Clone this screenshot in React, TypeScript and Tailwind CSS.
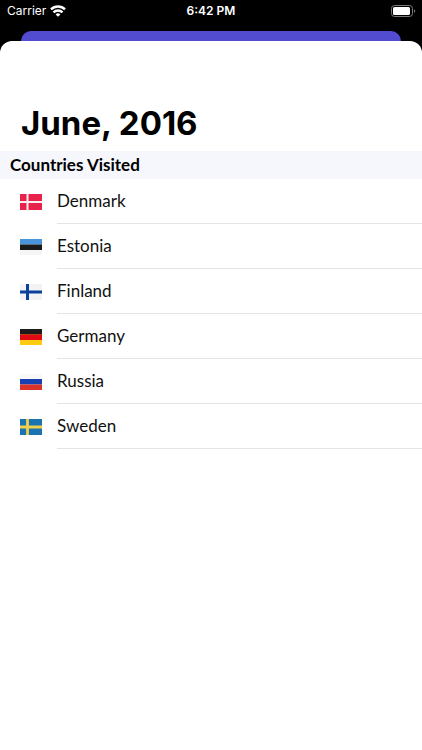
import React from 'react';

interface Country {
  name: string;
  flag: React.ReactNode;
}

const countries: Country[] = [
  {
    name: 'Denmark',
    flag: (
      <>
        <rect width="22" height="16" fill="#e8234b" />
        <path d="M7.5 0v16M0 8h22" stroke="#fbeef1" strokeWidth="2" />
      </>
    ),
  },
  {
    name: 'Estonia',
    flag: (
      <>
        <rect width="22" height="16" fill="#f5f5f5" />
        <rect width="22" height="5.5" fill="#4a94dc" />
        <rect y="5.5" width="22" height="5.5" fill="#1a1a1a" />
      </>
    ),
  },
  {
    name: 'Finland',
    flag: (
      <>
        <rect width="22" height="16" fill="#f2f3f5" />
        <path d="M7.5 0v16M0 8h22" stroke="#0b419b" strokeWidth="3" />
      </>
    ),
  },
  {
    name: 'Germany',
    flag: (
      <>
        <rect width="22" height="16" fill="#fdcb10" />
        <rect width="22" height="5.5" fill="#1f1a1b" />
        <rect y="5.5" width="22" height="5.5" fill="#e00a13" />
      </>
    ),
  },
  {
    name: 'Russia',
    flag: (
      <>
        <rect width="22" height="16" fill="#f9f9f9" />
        <rect y="5" width="22" height="5.5" fill="#1740b0" />
        <rect y="10.5" width="22" height="5.5" fill="#dc3329" />
      </>
    ),
  },
  {
    name: 'Sweden',
    flag: (
      <>
        <rect width="22" height="16" fill="#1b74b0" />
        <path d="M7.5 0v16M0 8h22" stroke="#f0d04c" strokeWidth="2.8" />
      </>
    ),
  },
];

const StatusBar: React.FC = () => (
  <div className="grid h-[31px] grid-cols-3 items-start px-[6px] pt-[3px] text-[12px] leading-4 text-white font-['Inter',sans-serif]">
    <div className="flex h-4 items-center gap-1 pl-px">
      <span>Carrier</span>
      <svg className="h-[12px] w-[16px]" viewBox="0 0 16 12" fill="none" stroke="white" strokeWidth="2.4">
        <path d="M1 4.4a10 10 0 0 1 14 0" />
        <path d="M3.5 7.3a6.4 6.4 0 0 1 9 0" />
        <path d="M8 11.8L5.6 9.4a3.4 3.4 0 0 1 4.8 0z" fill="white" stroke="none" />
      </svg>
    </div>
    <span className="text-center font-semibold">6:42 PM</span>
    <div className="flex h-4 items-center justify-end">
      <svg className="h-[12px] w-[25px]" viewBox="0 0 25 12">
        <rect x="0.5" y="0.5" width="21" height="11" rx="3" fill="none" stroke="#7a7a7a" />
        <rect x="2" y="2" width="17" height="8" rx="1.6" fill="white" />
        <path d="M23 4.2v3.6c1.6-.6 1.6-3 0-3.6z" fill="#7a7a7a" />
      </svg>
    </div>
  </div>
);

const App: React.FC = () => {
  return (
    <div className="flex min-h-screen flex-col bg-black">
      <StatusBar />
      {/* Edge of the screen behind the sheet */}
      <div className="mx-[21px] h-[10px] rounded-t-[10px] bg-[#524dd0]" />

      {/* Sheet */}
      <main className="flex-1 rounded-t-[12px] bg-white pt-[60px] text-black">
        <h1 className="px-[21px] pb-[6px] text-[33px] leading-[44px] font-bold font-['Inter',sans-serif]">
          June, 2016
        </h1>
        <section className="font-['Lato',sans-serif]">
          <h2 className="bg-[#f6f6fd] px-[10px] text-[17px] leading-[28px] font-bold">
            Countries Visited
          </h2>
          <ul>
            {countries.map((country) => (
              <li key={country.name} className="flex h-[45px] items-center pl-[20px]">
                <svg className="h-[16px] w-[22px] shrink-0" viewBox="0 0 22 16">
                  {country.flag}
                </svg>
                <span className="ml-[15px] flex h-full flex-1 items-center border-b border-[#e4e4e6] text-[17px] text-[#111]">
                  {country.name}
                </span>
              </li>
            ))}
          </ul>
        </section>
      </main>
    </div>
  );
};

export default App;
